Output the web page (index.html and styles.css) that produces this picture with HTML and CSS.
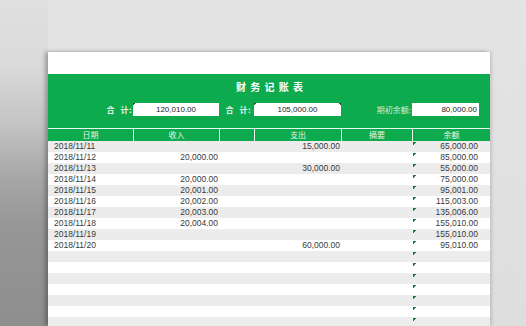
FILE: index.html
```html
<!DOCTYPE html>
<html lang="zh-CN">
<head>
    <meta charset="UTF-8">
    <title>财务记账表</title>
    <link rel="stylesheet" href="styles.css">
</head>
<body>
    <div class="stage">
        <div class="gutter"></div>

        <div class="sheet">
            <div class="sheet-top"></div>

            <div class="banner">
                <div class="title">财 务 记 账 表</div>
                <div class="summary">
                    <div class="sum-label">合 计:</div>
                    <div class="sum-box mark-left">120,010.00</div>
                    <div class="sum-label">合 计:</div>
                    <div class="sum-box mark-left mark-right">105,000.00</div>
                    <div class="sum-label thin">期初余额:</div>
                    <div class="sum-box right">80,000.00</div>
                </div>
            </div>

            <table class="ledger">
                <colgroup>
                    <col class="c-date">
                    <col class="c-in">
                    <col class="c-gap">
                    <col class="c-out">
                    <col class="c-note">
                    <col class="c-bal">
                </colgroup>
                <thead>
                    <tr>
                        <th>日期</th>
                        <th>收入</th>
                        <th></th>
                        <th>支出</th>
                        <th>摘要</th>
                        <th>余额</th>
                    </tr>
                </thead>
                <tbody>
                    <tr><td>2018/11/11</td><td class="num"></td><td></td><td class="num">15,000.00</td><td></td><td class="bal">65,000.00</td></tr>
                    <tr><td>2018/11/12</td><td class="num">20,000.00</td><td></td><td class="num"></td><td></td><td class="bal">85,000.00</td></tr>
                    <tr><td>2018/11/13</td><td class="num"></td><td></td><td class="num">30,000.00</td><td></td><td class="bal">55,000.00</td></tr>
                    <tr><td>2018/11/14</td><td class="num">20,000.00</td><td></td><td class="num"></td><td></td><td class="bal">75,000.00</td></tr>
                    <tr><td>2018/11/15</td><td class="num">20,001.00</td><td></td><td class="num"></td><td></td><td class="bal">95,001.00</td></tr>
                    <tr><td>2018/11/16</td><td class="num">20,002.00</td><td></td><td class="num"></td><td></td><td class="bal">115,003.00</td></tr>
                    <tr><td>2018/11/17</td><td class="num">20,003.00</td><td></td><td class="num"></td><td></td><td class="bal">135,006.00</td></tr>
                    <tr><td>2018/11/18</td><td class="num">20,004.00</td><td></td><td class="num"></td><td></td><td class="bal">155,010.00</td></tr>
                    <tr><td>2018/11/19</td><td class="num"></td><td></td><td class="num"></td><td></td><td class="bal">155,010.00</td></tr>
                    <tr><td>2018/11/20</td><td class="num"></td><td></td><td class="num">60,000.00</td><td></td><td class="bal">95,010.00</td></tr>
                    <tr><td></td><td></td><td></td><td></td><td></td><td class="bal"></td></tr>
                    <tr><td></td><td></td><td></td><td></td><td></td><td class="bal"></td></tr>
                    <tr><td></td><td></td><td></td><td></td><td></td><td class="bal"></td></tr>
                    <tr><td></td><td></td><td></td><td></td><td></td><td class="bal"></td></tr>
                    <tr><td></td><td></td><td></td><td></td><td></td><td class="bal"></td></tr>
                    <tr><td></td><td></td><td></td><td></td><td></td><td class="bal"></td></tr>
                    <tr><td></td><td></td><td></td><td></td><td></td><td class="bal"></td></tr>
                </tbody>
            </table>
        </div>

        <div class="gutter-right"></div>
    </div>
</body>
</html>
```

FILE: styles.css
```css
html, body {
    margin: 0;
    padding: 0;
}

body {
    font-family: "Liberation Sans", "Noto Sans CJK SC", sans-serif;
    color: #3a3a3a;
    background: linear-gradient(to bottom, #e4e4e4, #dedede);
    overflow: hidden;
}

.stage {
    display: flex;
    height: 326px;
    overflow: hidden;
}

/* folded paper shadow on the left */
.gutter {
    width: 48px;
    flex-shrink: 0;
    background: linear-gradient(to bottom, #e0e0e0 0%, #dadada 20%, #c4c4c4 38%, #a6a6a6 55%, #969696 70%, #8e8e8e 100%);
}

.gutter-right {
    flex: 1;
}

.sheet {
    width: 442px;
    flex-shrink: 0;
    margin-top: 52px;
    background-color: white;
    box-shadow: -3px 0 4px rgba(0,0,0,0.28), 2px 0 3px rgba(0,0,0,0.12);
}

.sheet-top {
    height: 22px;
    background-color: white;
}

.banner {
    height: 54px;
    background-color: #0daa4e;
    padding-top: 6px;
    box-sizing: border-box;
}

.title {
    text-align: center;
    color: white;
    font-family: "Noto Sans CJK SC", sans-serif;
    font-weight: bold;
    font-size: 10px;
    line-height: 14px;
    letter-spacing: 1px;
    word-spacing: 0;
    padding-left: 2px;
}

.summary {
    display: grid;
    grid-template-columns: 85px 86px 35px 87px 71px 78px;
    margin-top: 9px;
    height: 13px;
}

.sum-label {
    text-align: right;
    color: #e8f7ee;
    font-family: "Noto Sans CJK SC", sans-serif;
    font-weight: bold;
    font-size: 8px;
    line-height: 13px;
    letter-spacing: 0.5px;
    word-spacing: 3px;
    padding-right: 1px;
}

.sum-label:nth-child(3) {
    padding-right: 3px;
}

.sum-label.thin {
    font-weight: normal;
    letter-spacing: 0;
    color: #cdeedb;
    padding-right: 1px;
}

.sum-box {
    background-color: white;
    color: #222;
    font-size: 8px;
    line-height: 13px;
    text-align: center;
}

.sum-box.right {
    text-align: right;
    padding-right: 2px;
    margin-right: 11px;
}

.mark-left {
    background: linear-gradient(135deg, #2f4f2f 2px, rgba(0,0,0,0) 2px) no-repeat left top / 4px 4px, white;
}

.mark-right {
    background:
        linear-gradient(135deg, #2f4f2f 2px, rgba(0,0,0,0) 2px) no-repeat left top / 4px 4px,
        linear-gradient(225deg, #2f4f2f 2px, rgba(0,0,0,0) 2px) no-repeat right top / 4px 4px,
        white;
}

.ledger {
    width: 442px;
    table-layout: fixed;
    border-collapse: separate;
    border-spacing: 0;
    font-size: 8.5px;
}

.c-date { width: 85px; }
.c-in { width: 86px; }
.c-gap { width: 35px; }
.c-out { width: 87px; }
.c-note { width: 71px; }
.c-bal { width: 78px; }

.ledger th {
    background-color: #0daa4e;
    color: #e4f6eb;
    font-family: "Noto Sans CJK SC", sans-serif;
    font-weight: normal;
    font-size: 8px;
    height: 12px;
    line-height: 12px;
    padding: 0;
    border-top: 1px solid #e9f7ee;
    border-left: 1px solid #e9f7ee;
}

.ledger th:first-child {
    border-left: none;
}

.ledger td {
    height: 11px;
    line-height: 11px;
    padding: 0 1px 0 6px;
    white-space: nowrap;
    overflow: hidden;
}

.ledger tbody tr:nth-child(odd) {
    background-color: #ececec;
}

.ledger td.num {
    text-align: right;
}

.ledger td.bal {
    text-align: right;
    padding-right: 12px;
    background: linear-gradient(135deg, #1d7a32 2.5px, rgba(0,0,0,0) 2.5px) no-repeat 1px 1px / 4px 4px;
}
```
